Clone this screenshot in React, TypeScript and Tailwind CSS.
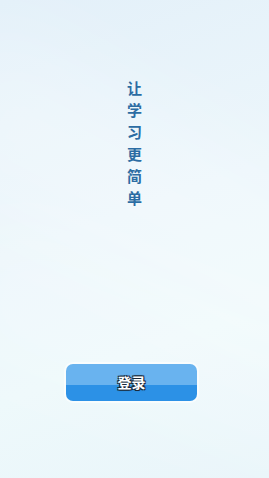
export default function App() {
  const slogan = ['让', '学', '习', '更', '简', '单'];

  return (
    <div
      className="relative flex flex-col items-center h-[478px] w-full overflow-hidden bg-[linear-gradient(160deg,#e3f0f9_0%,#ecf6fb_45%,#eef9fb_70%,#e9f5fa_100%)]"
      style={{ fontFamily: '"Noto Sans CJK SC", "Noto Sans", sans-serif' }}
    >
      {/* soft light bands */}
      <div className="absolute -left-20 top-[120px] h-[160px] w-[460px] rotate-[28deg] bg-white/25 blur-2xl" />
      <div className="absolute -left-10 top-[300px] h-[120px] w-[460px] rotate-[20deg] bg-white/20 blur-2xl" />

      {/* Slogan */}
      <div className="relative mt-[80px] flex flex-col items-center gap-[6px] text-[15px] font-bold leading-[16px] text-[#2b6ca3]">
        {slogan.map((c) => (
          <span key={c}>{c}</span>
        ))}
      </div>

      {/* Login button */}
      <button className="relative mt-[158px] mr-[6px] h-[37px] w-[131px] overflow-hidden rounded-[7px] shadow-[0_0_0_2px_rgba(255,255,255,0.6)]">
        <div className="flex h-full flex-col">
          <div className="h-[21px] bg-[#69b3ef]" />
          <div className="flex-1 bg-[#2c91e6]" />
        </div>
        <span
          className="absolute inset-0 flex items-center justify-center text-[14px] font-bold text-white"
          style={{ textShadow: '0 0 2px #1a2a3a, 1px 1px 0 #1a2a3a, -1px -1px 0 #1a2a3a, 1px -1px 0 #1a2a3a, -1px 1px 0 #1a2a3a' }}
        >
          登录
        </span>
      </button>
    </div>
  );
}
